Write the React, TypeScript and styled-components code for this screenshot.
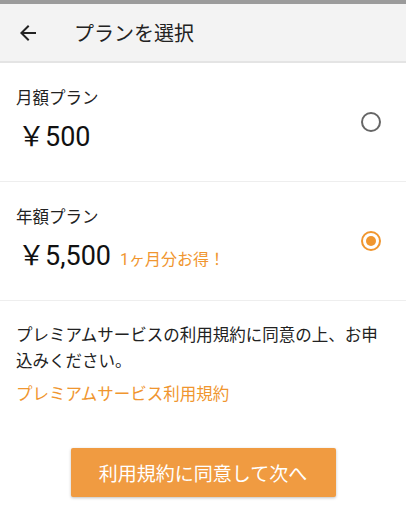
import React, { useState } from 'react';
import styled, { createGlobalStyle } from 'styled-components';

const GlobalStyle = createGlobalStyle`
  html, body {
    margin: 0;
    padding: 0;
    background: #fff;
  }
  body {
    font-family: Roboto, "Noto Sans CJK JP", "Noto Sans", sans-serif;
    color: #222;
  }
`;

const Screen = styled.div`
  width: 406px;
  height: 508px;
  display: flex;
  flex-direction: column;
  background: #fff;
  overflow: hidden;
`;

const StatusStrip = styled.div`
  height: 4px;
  background: #9b9b9b;
`;

const Header = styled.header`
  height: 57px;
  display: flex;
  align-items: center;
  background: #f3f3f3;
  border-bottom: 2px solid #e4e4e4;
`;

const BackButton = styled.button`
  width: 24px;
  height: 24px;
  margin-left: 16px;
  padding: 0;
  border: none;
  background: none;
  display: flex;
  color: #222;
`;

const Title = styled.h1`
  margin: 0 0 0 34px;
  font-size: 20px;
  font-weight: 400;
  color: #222;
`;

const PlanRow = styled.label`
  display: flex;
  align-items: center;
  padding: 26px 25px 26px 16px;
  border-bottom: 1px solid #eeeeee;
  cursor: pointer;
`;

const PlanInfo = styled.div`
  flex: 1;
  display: flex;
  flex-direction: column;
  gap: 10px;
`;

const PlanName = styled.div`
  height: 20px;
  font-size: 16.5px;
  line-height: 20px;
  color: #222;
`;

const PriceLine = styled.div`
  height: 36px;
  display: flex;
  align-items: baseline;
  line-height: 36px;
  padding-left: 2px;
  overflow: hidden;
`;

const Price = styled.span`
  font-size: 27px;
  color: #111;
`;

const Bonus = styled.span`
  margin-left: 9px;
  font-size: 16px;
  color: #f0962f;
`;

const Radio = styled.span<{ $checked: boolean }>`
  width: 20px;
  height: 20px;
  box-sizing: border-box;
  border-radius: 50%;
  border: 2px solid ${p => (p.$checked ? '#f0962f' : '#666')};
  display: flex;
  align-items: center;
  justify-content: center;
  &::after {
    content: '';
    width: 10px;
    height: 10px;
    border-radius: 50%;
    background: #f0962f;
    display: ${p => (p.$checked ? 'block' : 'none')};
  }
`;

const Terms = styled.section`
  padding: 22px 14px 0 16px;
`;

const Notice = styled.p`
  margin: 0;
  font-size: 16.5px;
  line-height: 26px;
  color: #222;
`;

const TermsLink = styled.a`
  display: block;
  margin-top: 7px;
  font-size: 16.5px;
  line-height: 26px;
  color: #f0962f;
  text-decoration: none;
`;

const Footer = styled.div`
  display: flex;
  justify-content: center;
  padding-top: 40px;
`;

const NextButton = styled.button`
  width: 265px;
  height: 49px;
  border: none;
  border-radius: 2px;
  background: #f09b41;
  color: #fff;
  font-family: inherit;
  font-size: 19px;
  box-shadow: 0 1px 3px rgba(0, 0, 0, 0.25);
`;

const plans = [
  { id: 'monthly', name: '月額プラン', price: '￥500' },
  { id: 'yearly', name: '年額プラン', price: '￥5,500', bonus: '1ヶ月分お得！' },
];

export default function App() {
  const [selected, setSelected] = useState('yearly');

  return (
    <Screen>
      <GlobalStyle />
      <StatusStrip />
      <Header>
        <BackButton aria-label="戻る">
          <svg width="24" height="24" viewBox="0 0 24 24">
            <path d="M20 11H7.83l5.59-5.59L12 4l-8 8 8 8 1.41-1.41L7.83 13H20v-2z" fill="currentColor" />
          </svg>
        </BackButton>
        <Title>プランを選択</Title>
      </Header>
      {plans.map(plan => (
        <PlanRow key={plan.id} onClick={() => setSelected(plan.id)}>
          <PlanInfo>
            <PlanName>{plan.name}</PlanName>
            <PriceLine>
              <Price>{plan.price}</Price>
              {plan.bonus && <Bonus>{plan.bonus}</Bonus>}
            </PriceLine>
          </PlanInfo>
          <Radio $checked={selected === plan.id} />
        </PlanRow>
      ))}
      <Terms>
        <Notice>プレミアムサービスの利用規約に同意の上、お申込みください。</Notice>
        <TermsLink href="#">プレミアムサービス利用規約</TermsLink>
      </Terms>
      <Footer>
        <NextButton>利用規約に同意して次へ</NextButton>
      </Footer>
    </Screen>
  );
}
